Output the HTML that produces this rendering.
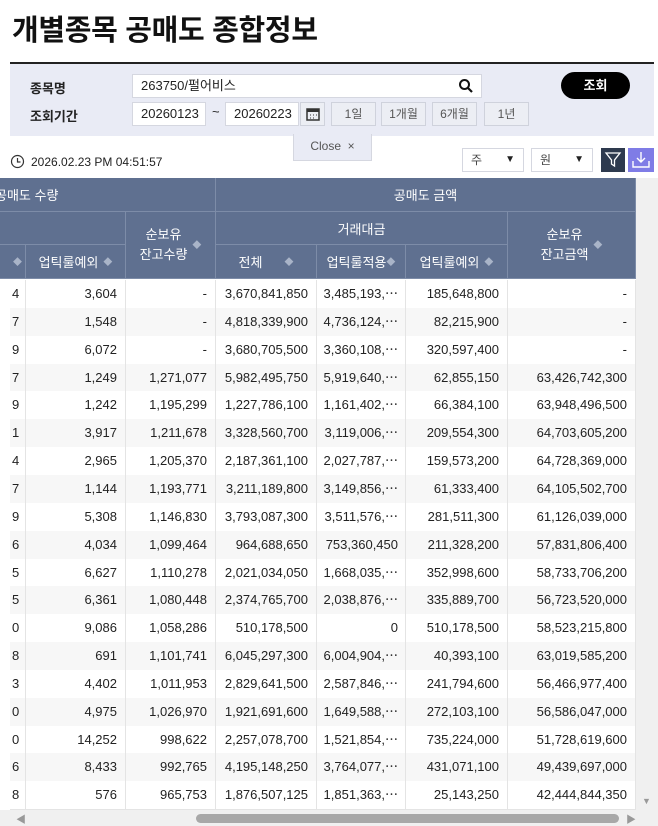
<!DOCTYPE html><html><head><meta charset="utf-8"><style>
body{margin:0;width:658px;height:826px;overflow:hidden;background:#fff;font-family:"Liberation Sans","Noto Sans CJK KR",sans-serif;position:relative;color:#222}
.a{position:absolute}
h1{position:absolute;left:12px;top:7px;margin:0;font-size:29px;font-weight:bold;letter-spacing:-0.3px;color:#111}
.panel{left:10px;top:62px;width:644px;height:72px;background:#e9ebf5;border-top:2px solid #222}
.lbl{font-size:13px;font-weight:bold;color:#222}
.inp{background:#fff;border:1px solid #d5d7e0;font-size:13px;box-sizing:border-box;padding-left:8px;line-height:22px;height:24px}
.btn{background:#eceef4;border:1px solid #cfd2dc;font-size:12px;color:#555;text-align:center;line-height:22px;height:24px;box-sizing:border-box}
.h{background:#5f7090;color:#fff;font-size:13px;text-align:center;box-sizing:border-box;border-right:1px solid #7d8ca8;border-bottom:1px solid #7d8ca8;display:flex;align-items:center;justify-content:center}
.s{font-size:9px;color:#a9b4c8;margin-left:5px}
.r{height:28px;left:10px;width:626px;border-bottom:1px solid #e4e4e4;font-size:13px;color:#222}
.c{position:absolute;top:0;height:28px;line-height:27px;text-align:right;padding-right:8px;box-sizing:border-box;border-right:1px solid #e4e4e4}
</style></head><body>
<h1>개별종목 공매도 종합정보</h1>
<div class="a panel"></div>
<div class="a lbl" style="left:30px;top:78px">종목명</div>
<div class="a lbl" style="left:30px;top:106px">조회기간</div>
<div class="a inp" style="left:132px;top:74px;width:350px">263750/펄어비스</div>
<svg class="a" style="left:458px;top:78px" width="16" height="16"><circle cx="6.5" cy="6.5" r="4.5" fill="none" stroke="#111" stroke-width="2"/><path d="M10 10l4 4" stroke="#111" stroke-width="2.2"/></svg>
<div class="a" style="left:561px;top:72px;width:69px;height:27px;border-radius:14px;background:#000;color:#fff;font-size:13px;font-weight:bold;text-align:center;line-height:27px">조회</div>
<div class="a inp" style="left:132px;top:102px;width:74px">20260123</div>
<div class="a" style="left:212px;top:104px;font-size:13px">~</div>
<div class="a inp" style="left:225px;top:102px;width:74px">20260223</div>
<div class="a btn" style="left:300px;top:102px;width:25px"><svg width="14" height="14" style="margin-top:4px"><rect x="1" y="2" width="12" height="11" fill="none" stroke="#333" stroke-width="1.5"/><rect x="1" y="2" width="12" height="3" fill="#333"/><path d="M4 8h1M7 8h1M10 8h1M4 11h1M7 11h1" stroke="#333"/></svg></div>
<div class="a btn" style="left:331px;top:102px;width:45px">1일</div>
<div class="a btn" style="left:381px;top:102px;width:45px">1개월</div>
<div class="a btn" style="left:432px;top:102px;width:45px">6개월</div>
<div class="a btn" style="left:484px;top:102px;width:45px">1년</div>
<div class="a" style="left:293px;top:134px;width:77px;height:26px;background:#e9ebf5;border:1px solid #d5d7e0;border-top:none;font-size:12px;color:#555;text-align:center;line-height:24px">Close &nbsp;×</div>
<svg class="a" style="left:10px;top:154px" width="15" height="15"><circle cx="7.5" cy="7.5" r="6" fill="none" stroke="#333" stroke-width="1.2"/><path d="M7.5 4v4h3" fill="none" stroke="#333" stroke-width="1.2"/></svg>
<div class="a" style="left:31px;top:155px;font-size:12px">2026.02.23 PM 04:51:57</div>
<div class="a inp" style="left:462px;top:148px;width:62px;font-size:12px;color:#444">주<span style="position:absolute;right:8px;font-size:10px;color:#222">▼</span></div>
<div class="a inp" style="left:531px;top:148px;width:62px;font-size:12px;color:#444">원<span style="position:absolute;right:8px;font-size:10px;color:#222">▼</span></div>
<div class="a" style="left:601px;top:148px;width:24px;height:24px;background:#2e3a4e"><svg width="24" height="24"><path d="M5 5h14l-5.5 7v6l-3-2v-4z" fill="none" stroke="#fff" stroke-width="1.3"/></svg></div>
<div class="a" style="left:628px;top:148px;width:26px;height:24px;background:#7f7ce6"><svg width="26" height="24"><path d="M13 4v10M9 10l4 4 4-4M5 13v6h16v-6" fill="none" stroke="#fff" stroke-width="1.4"/></svg></div>
<!-- header -->
<div class="a h" style="left:0px;top:178px;width:216px;height:34px;justify-content:flex-start;overflow:hidden"><span style="margin-left:-5px">공매도 수량</span></div>
<div class="a h" style="left:0px;top:212px;width:126px;height:33px"></div>
<div class="a h" style="left:216px;top:178px;width:420px;height:34px">공매도 금액</div>
<div class="a h" style="left:0px;top:245px;width:26px;height:34px"><span class="s" style="margin:0 0 0 10px">◆</span></div>
<div class="a h" style="left:26px;top:245px;width:100px;height:34px">업틱룰예외<span class="s">◆</span></div>
<div class="a h" style="left:126px;top:212px;width:90px;height:67px;line-height:20px">순보유<br>잔고수량<span class="s">◆</span></div>
<div class="a h" style="left:216px;top:212px;width:292px;height:33px">거래대금</div>
<div class="a h" style="left:216px;top:245px;width:101px;height:34px">전체<span class="s" style="margin-left:22px">◆</span></div>
<div class="a h" style="left:317px;top:245px;width:89px;height:34px">업틱룰적용<span class="s" style="margin:0">◆</span></div>
<div class="a h" style="left:406px;top:245px;width:102px;height:34px">업틱룰예외<span class="s">◆</span></div>
<div class="a h" style="left:508px;top:212px;width:128px;height:67px;line-height:20px">순보유<br>잔고금액<span class="s">◆</span></div>
<div class="a" style="left:636px;top:178px;width:22px;height:632px;background:#f0f0f0"></div>
<div class="a" style="left:642px;top:796px;font-size:9px;color:#999">▼</div>
<div id="rows"></div>
<div class="a" style="left:0;top:810px;width:658px;height:16px;background:#f0f0f0"></div>
<div class="a" style="left:196px;top:814px;width:423px;height:9px;border-radius:5px;background:#a8a8a8"></div>
<div class="a" style="left:16px;top:811px;font-size:10px;color:#999">◀</div>
<div class="a" style="left:626px;top:811px;font-size:10px;color:#999">▶</div>
<script>
var d=[["4","3,604","-","3,670,841,850","3,485,193,⋯","185,648,800","-"],
["7","1,548","-","4,818,339,900","4,736,124,⋯","82,215,900","-"],
["9","6,072","-","3,680,705,500","3,360,108,⋯","320,597,400","-"],
["7","1,249","1,271,077","5,982,495,750","5,919,640,⋯","62,855,150","63,426,742,300"],
["9","1,242","1,195,299","1,227,786,100","1,161,402,⋯","66,384,100","63,948,496,500"],
["1","3,917","1,211,678","3,328,560,700","3,119,006,⋯","209,554,300","64,703,605,200"],
["4","2,965","1,205,370","2,187,361,100","2,027,787,⋯","159,573,200","64,728,369,000"],
["7","1,144","1,193,771","3,211,189,800","3,149,856,⋯","61,333,400","64,105,502,700"],
["9","5,308","1,146,830","3,793,087,300","3,511,576,⋯","281,511,300","61,126,039,000"],
["6","4,034","1,099,464","964,688,650","753,360,450","211,328,200","57,831,806,400"],
["5","6,627","1,110,278","2,021,034,050","1,668,035,⋯","352,998,600","58,733,706,200"],
["5","6,361","1,080,448","2,374,765,700","2,038,876,⋯","335,889,700","56,723,520,000"],
["0","9,086","1,058,286","510,178,500","0","510,178,500","58,523,215,800"],
["8","691","1,101,741","6,045,297,300","6,004,904,⋯","40,393,100","63,019,585,200"],
["3","4,402","1,011,953","2,829,641,500","2,587,846,⋯","241,794,600","56,466,977,400"],
["0","4,975","1,026,970","1,921,691,600","1,649,588,⋯","272,103,100","56,586,047,000"],
["0","14,252","998,622","2,257,078,700","1,521,854,⋯","735,224,000","51,728,619,600"],
["6","8,433","992,765","4,195,148,250","3,764,077,⋯","431,071,100","49,439,697,000"],
["8","576","965,753","1,876,507,125","1,851,363,⋯","25,143,250","42,444,844,350"]];
var xs=[0,16,116,206,307,396,498,626],h="";
d.forEach(function(r,i){h+='<div class="a r" style="top:'+(280+i*27.85)+'px;background:'+(i%2?'#f7f7f7':'#fff')+'">';
r.forEach(function(v,j){var st=j==0?'text-align:left;padding-left:2px;':'';if(j==4)st+='padding-right:7px;';
h+='<div class="c" style="left:'+xs[j]+'px;width:'+(xs[j+1]-xs[j])+'px;'+st+'">'+v+'</div>'});h+='</div>'});
document.getElementById('rows').innerHTML=h;
</script>
</body></html>
